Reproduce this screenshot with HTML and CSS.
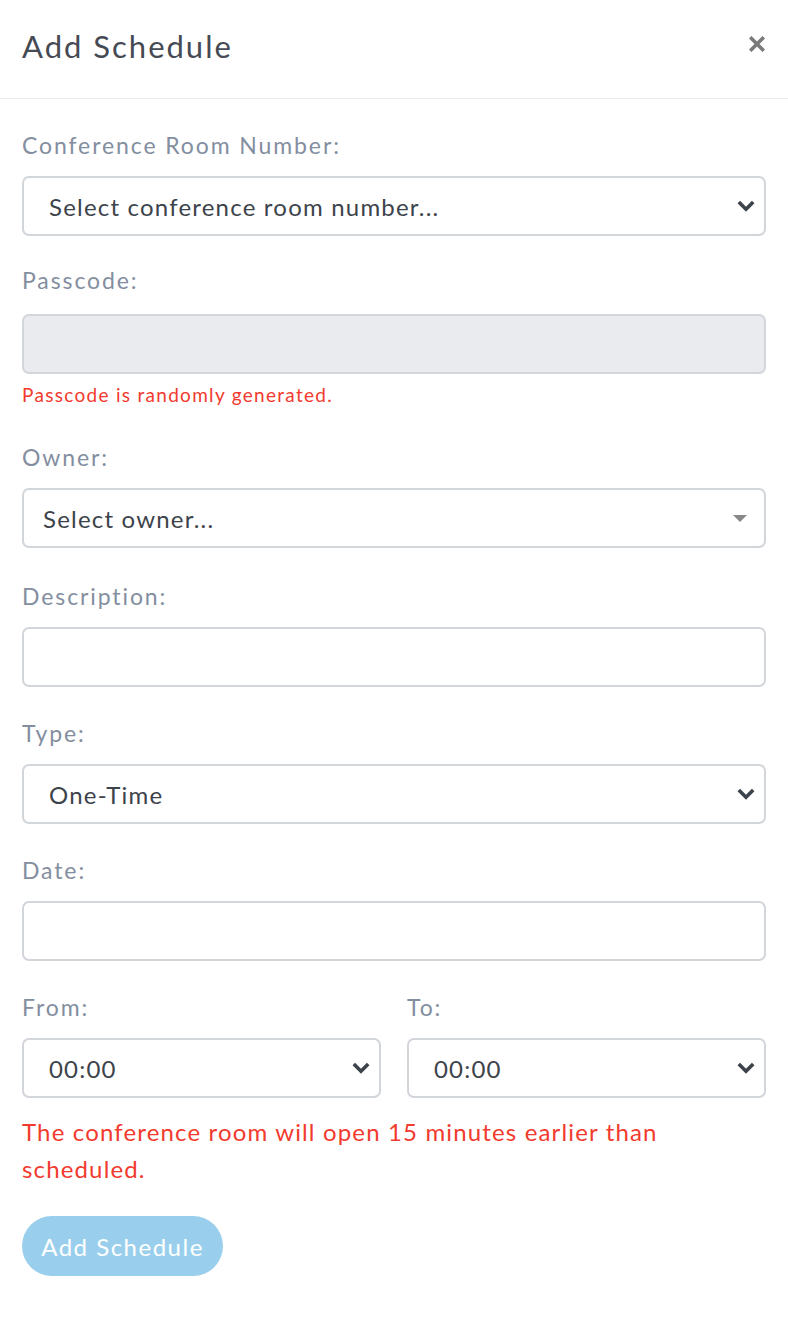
FILE: index.html
```html
<!DOCTYPE html>
<html lang="en">
<head>
<meta charset="utf-8">
<title>Add Schedule</title>
<link rel="stylesheet" href="styles.css">
</head>
<body>
<div class="modal">
  <header class="modal-header">
    <h1 class="modal-title">Add Schedule</h1>
    <button class="close" type="button" aria-label="Close">
      <svg width="16" height="16" viewBox="0 0 16 16"><path d="M2.5 2.5 L13.5 13.5 M13.5 2.5 L2.5 13.5" stroke="#7a7a7a" stroke-width="3.6" stroke-linecap="square"/></svg>
    </button>
  </header>
  <form class="modal-body">
    <div class="group g-room">
      <label class="label">Conference Room Number:</label>
      <div class="control select">
        <span>Select conference room number...</span>
        <svg class="chev" width="18" height="12" viewBox="0 0 18 12"><path d="M1.8 2 L9 9.2 L16.2 2" fill="none" stroke="#3d434b" stroke-width="3.6"/></svg>
      </div>
    </div>
    <div class="group g-pass">
      <label class="label">Passcode:</label>
      <div class="control disabled"></div>
      <div class="help">Passcode is randomly generated.</div>
    </div>
    <div class="group g-owner">
      <label class="label">Owner:</label>
      <div class="control select select2">
        <span>Select owner...</span>
        <svg class="tri" width="14" height="7" viewBox="0 0 14 7"><path d="M0 0 H14 L7 7 Z" fill="#888"/></svg>
      </div>
    </div>
    <div class="group">
      <label class="label">Description:</label>
      <div class="control"></div>
    </div>
    <div class="group">
      <label class="label">Type:</label>
      <div class="control select">
        <span>One-Time</span>
        <svg class="chev" width="18" height="12" viewBox="0 0 18 12"><path d="M1.8 2 L9 9.2 L16.2 2" fill="none" stroke="#3d434b" stroke-width="3.6"/></svg>
      </div>
    </div>
    <div class="group">
      <label class="label">Date:</label>
      <div class="control"></div>
    </div>
    <div class="row">
      <div class="col">
        <label class="label">From:</label>
        <div class="control select">
          <span>00:00</span>
          <svg class="chev" width="18" height="12" viewBox="0 0 18 12"><path d="M1.8 2 L9 9.2 L16.2 2" fill="none" stroke="#3d434b" stroke-width="3.6"/></svg>
        </div>
      </div>
      <div class="col">
        <label class="label">To:</label>
        <div class="control select">
          <span>00:00</span>
          <svg class="chev" width="18" height="12" viewBox="0 0 18 12"><path d="M1.8 2 L9 9.2 L16.2 2" fill="none" stroke="#3d434b" stroke-width="3.6"/></svg>
        </div>
      </div>
    </div>
    <p class="notice">The conference room will open 15 minutes earlier than scheduled.</p>
    <button class="submit" type="button">Add Schedule</button>
  </form>
</div>
</body>
</html>
```
FILE: styles.css
```css
* { box-sizing: border-box; }
html, body { margin: 0; padding: 0; background: #fff; }
body { font-family: "Lato", "Noto Sans", sans-serif; color: #3e454e; }
.modal { width: 788px; }
.modal-header {
  height: 99px;
  border-bottom: 1px solid #e8e9ee;
  display: flex;
  align-items: center;
  justify-content: space-between;
  padding: 0 23px 6px 22px;
}
.modal-title {
  margin: 0;
  font-family: "Lato", sans-serif;
  font-weight: 400;
  font-size: 31px;
  color: #454a54;
  letter-spacing: 2px;
}
.close {
  border: 0;
  background: none;
  padding: 0;
  display: flex;
  margin-top: -4px;
}
.modal-body { padding: 31px 22px 40px 22px; }
.group { margin-bottom: 31px; }
.group.g-room { margin-bottom: 29px; }
.group.g-pass { margin-bottom: 34px; }
.group.g-pass .label { margin-bottom: 19px; }
.group.g-owner { margin-bottom: 33px; }
.label {
  display: block;
  font-size: 23px;
  line-height: 30px;
  color: #838ea0;
  letter-spacing: 1.9px;
  margin-bottom: 16px;
}
.control {
  height: 60px;
  border: 2px solid #d2d5da;
  border-radius: 7px;
  background: #fff;
}
.control.disabled { background: #e9ebef; }
.select {
  display: flex;
  align-items: center;
  justify-content: space-between;
  padding: 0 9px 0 25px;
  font-size: 24px;
  letter-spacing: 1.2px;
  color: #3d434b;
}
.select2 { padding: 0 17px 0 19px; }
.help {
  margin-top: 8px;
  font-size: 19px;
  line-height: 26px;
  letter-spacing: 1.3px;
  color: #f23a2e;
}
.row { display: flex; gap: 26px; }
.col { flex: 1; }
.notice {
  margin: 15px 0 29px 0;
  font-size: 24px;
  line-height: 37px;
  letter-spacing: 1.15px;
  color: #f23a2e;
  max-width: 700px;
}
.submit {
  display: block;
  height: 60px;
  width: 201px;
  border: 0;
  border-radius: 30px;
  background: #99cfec;
  color: #fff;
  font-family: "Lato", sans-serif;
  font-size: 24px;
  letter-spacing: 1.5px;
  padding: 0;
}
```
